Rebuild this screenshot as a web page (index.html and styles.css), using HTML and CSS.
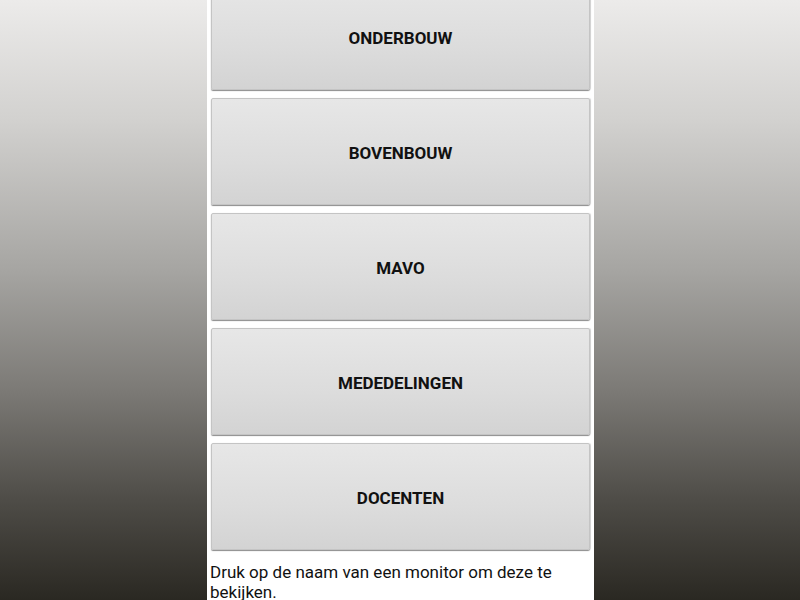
FILE: index.html
```html
<!DOCTYPE html>
<html lang="nl">
<head>
<meta charset="utf-8">
<title>Monitoren</title>
<link rel="stylesheet" href="styles.css">
</head>
<body>
<div class="page">
  <main class="column">
    <div class="buttons">
      <button class="monitor">ONDERBOUW</button>
      <button class="monitor">BOVENBOUW</button>
      <button class="monitor">MAVO</button>
      <button class="monitor">MEDEDELINGEN</button>
      <button class="monitor">DOCENTEN</button>
    </div>
    <p class="hint">Druk op de naam van een monitor om deze te bekijken.</p>
  </main>
</div>
</body>
</html>
```
FILE: styles.css
```css
html, body {
  margin: 0;
  padding: 0;
  height: 100%;
  overflow: hidden;
}
body {
  background: linear-gradient(to bottom, #ecebea 0%, #d2d1cf 20%, #a6a5a2 45%, #7c7a76 65%, #4f4d48 83%, #2a2822 100%);
  font-family: Roboto, "Liberation Sans", sans-serif;
}
.page {
  display: flex;
  justify-content: center;
  height: 100%;
}
.column {
  width: 387px;
  margin-left: 1px;
  background: #ffffff;
  padding: 0 4px 0 4px;
  box-sizing: border-box;
  display: flex;
  flex-direction: column;
  margin-top: -17px;
}
.buttons {
  display: flex;
  flex-direction: column;
  gap: 8px;
}
.monitor {
  height: 107px;
  width: 379px;
  border: 1px solid #c4c4c4;
  border-radius: 2px;
  background: linear-gradient(to bottom, #e7e7e7 0%, #dcdcdc 60%, #d3d3d3 100%);
  box-shadow: 0 1px 1px rgba(0, 0, 0, 0.45), 1px 0 1px rgba(0, 0, 0, 0.15);
  font-family: Roboto, "Liberation Sans", sans-serif;
  font-weight: 700;
  font-size: 17px;
  color: #111111;
  padding: 2px 0 0 0;
  cursor: pointer;
}
.hint {
  margin: 12px 0 0 -1px;
  font-size: 17px;
  line-height: 20px;
  color: #111111;
}
```
